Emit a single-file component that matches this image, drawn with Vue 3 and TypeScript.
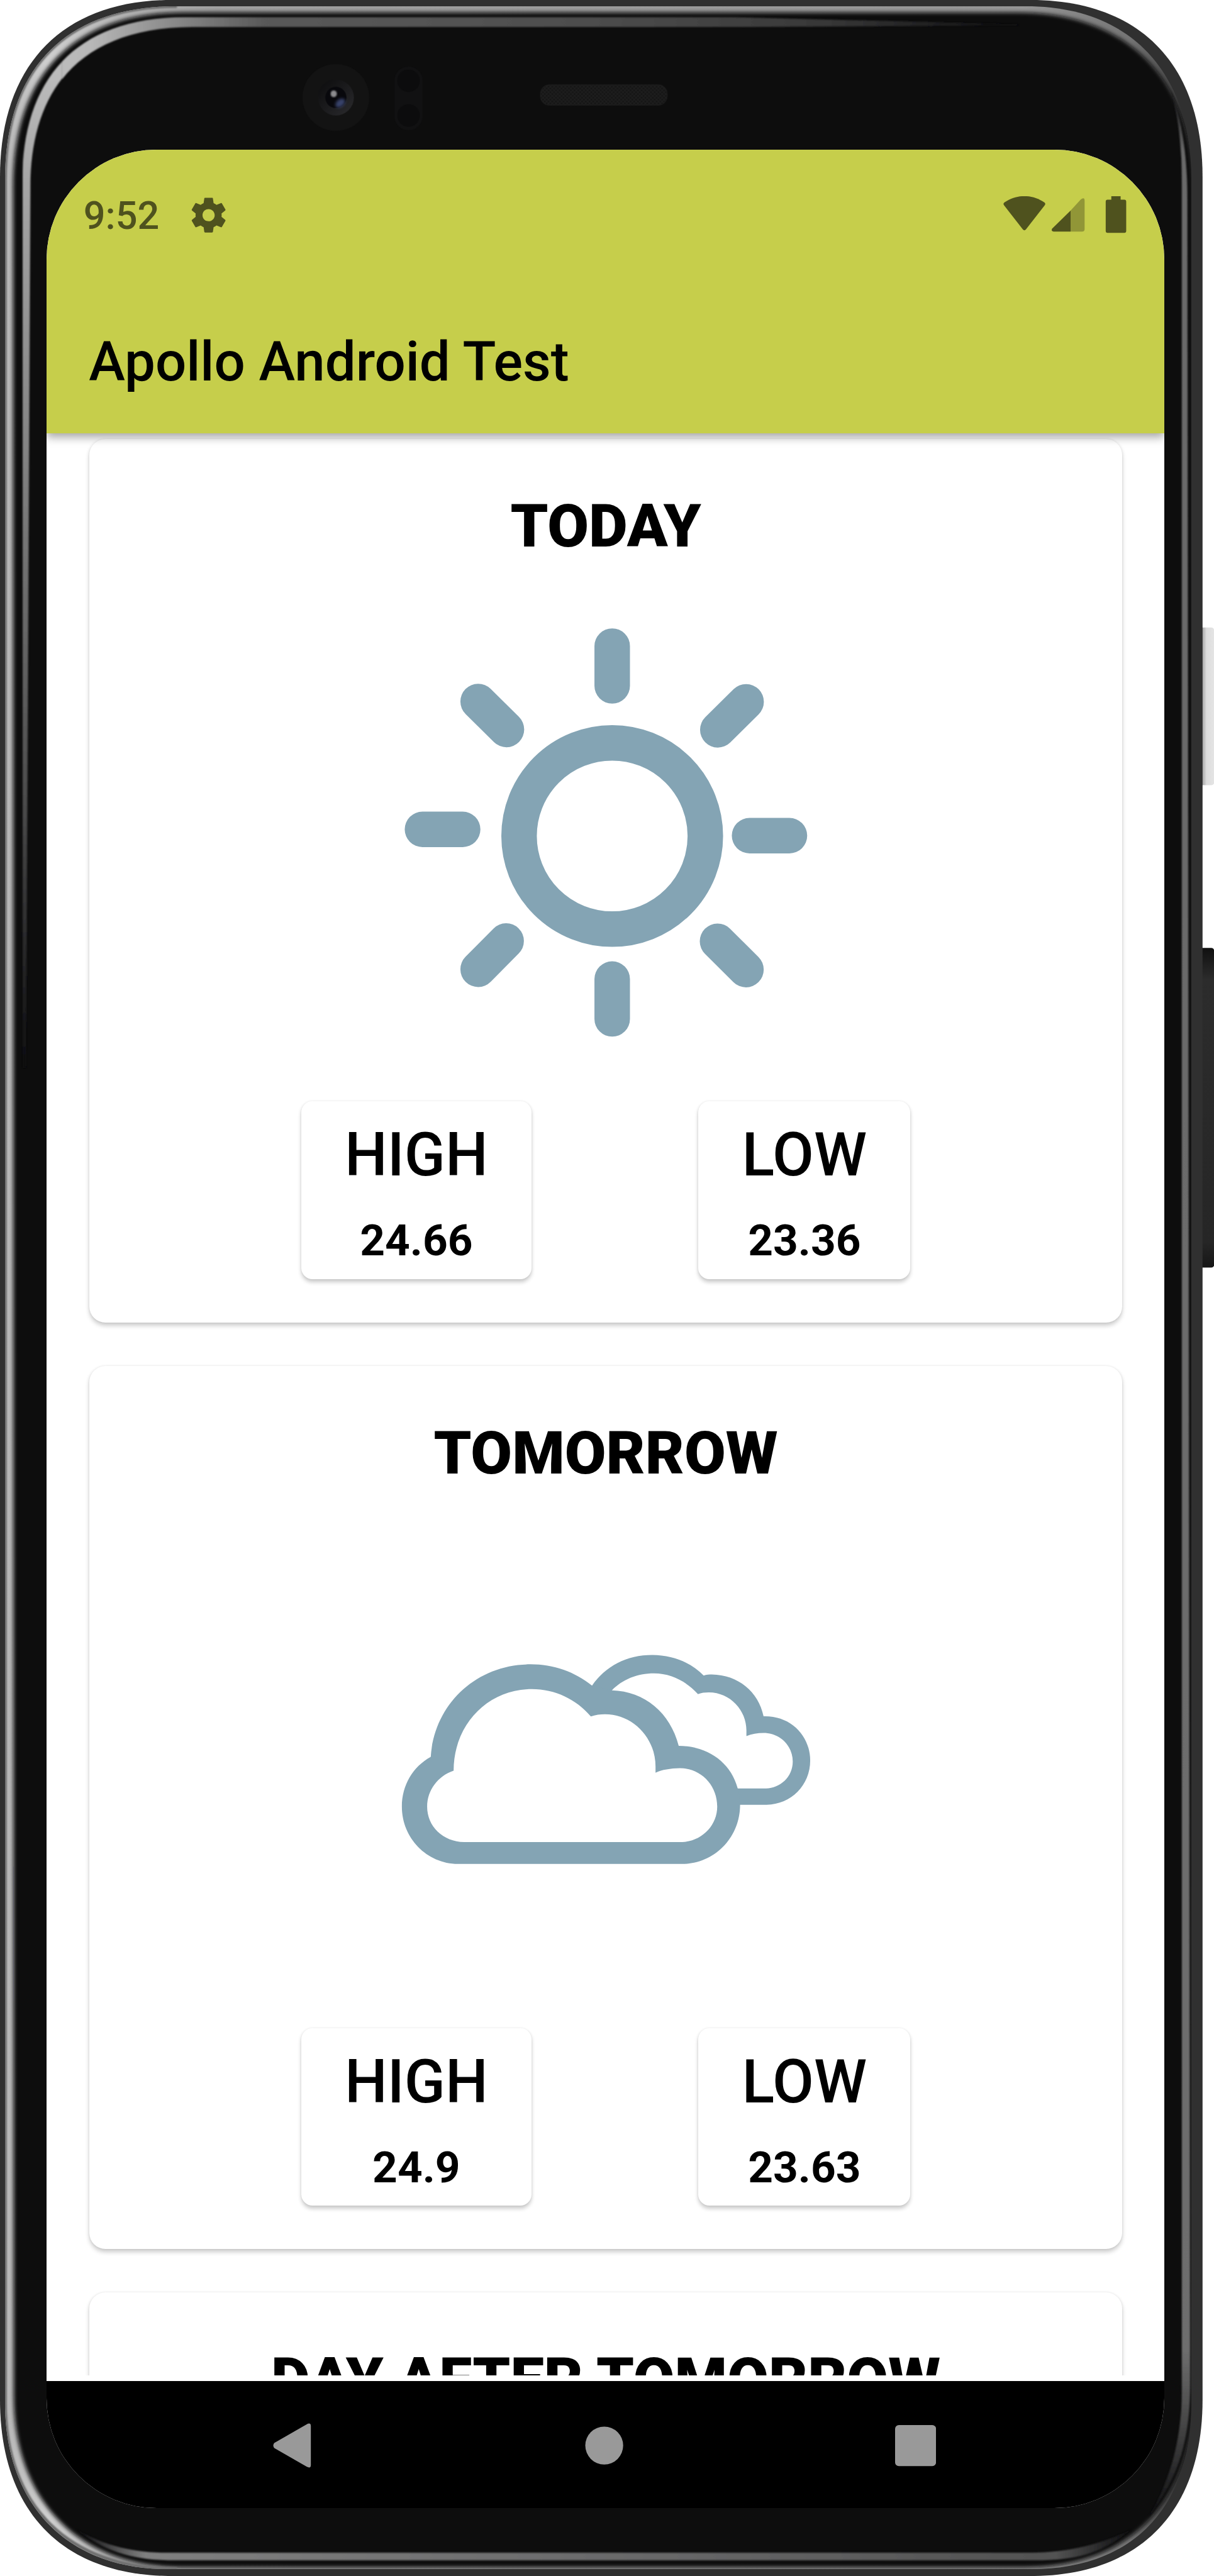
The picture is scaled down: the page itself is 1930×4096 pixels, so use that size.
<script setup lang="ts">
type Sky = 'sun' | 'clouds'

interface Forecast {
  title: string
  sky: Sky
  stats: { label: string; value: string }[]
}

const days: Forecast[] = [
  {
    title: 'TODAY',
    sky: 'sun',
    stats: [
      { label: 'HIGH', value: '24.66' },
      { label: 'LOW', value: '23.36' },
    ],
  },
  {
    title: 'TOMORROW',
    sky: 'clouds',
    stats: [
      { label: 'HIGH', value: '24.9' },
      { label: 'LOW', value: '23.63' },
    ],
  },
  { title: 'DAY AFTER TOMORROW', sky: 'sun', stats: [] },
]
</script>

<template>
  <div class="device">
    <svg class="shell" viewBox="0 0 1955 4150" aria-hidden="true">
      <defs>
        <linearGradient id="power" x1="1937" x2="1955" y1="0" y2="0" gradientUnits="userSpaceOnUse">
          <stop offset="0" stop-color="#a8a8a8" />
          <stop offset=".35" stop-color="#dcdcdc" />
          <stop offset="1" stop-color="#e4e4e4" />
        </linearGradient>
        <linearGradient id="volume" x1="0" x2="0" y1="1527" y2="2042" gradientUnits="userSpaceOnUse">
          <stop offset="0" stop-color="#101010" />
          <stop offset=".1" stop-color="#2c2c2c" />
          <stop offset=".92" stop-color="#262626" />
          <stop offset="1" stop-color="#161616" />
        </linearGradient>
        <linearGradient id="rim" x1="0" x2="1937" y1="0" y2="0" gradientUnits="userSpaceOnUse">
          <stop offset="0" stop-color="#b4b4b4" />
          <stop offset=".04" stop-color="#cfcfcf" />
          <stop offset=".1" stop-color="#b4b4b4" />
          <stop offset=".18" stop-color="#a0a0a0" />
          <stop offset=".85" stop-color="#969696" />
          <stop offset=".94" stop-color="#747474" />
          <stop offset=".985" stop-color="#3a3a3a" />
          <stop offset="1" stop-color="#0d0d0f" />
        </linearGradient>
        <linearGradient id="bandLeft" x1="0" x2="0" y1="0" y2="1720" gradientUnits="userSpaceOnUse">
          <stop offset="0" stop-color="#bebebe" />
          <stop offset=".07" stop-color="#bcbcbc" />
          <stop offset=".17" stop-color="#a6a6a6" />
          <stop offset=".42" stop-color="#848484" />
          <stop offset=".75" stop-color="#4c4c4c" />
          <stop offset="1" stop-color="#0d0d0f" />
        </linearGradient>
        <linearGradient id="bandTop" x1="100" x2="1640" y1="0" y2="0" gradientUnits="userSpaceOnUse">
          <stop offset="0" stop-color="#bcbcbc" />
          <stop offset=".03" stop-color="#b8b8b8" />
          <stop offset=".1" stop-color="#929292" />
          <stop offset=".21" stop-color="#5a5a5a" />
          <stop offset=".55" stop-color="#4e4e4e" />
          <stop offset=".8" stop-color="#383838" />
          <stop offset="1" stop-color="#0d0d0f" />
        </linearGradient>
        <linearGradient id="bandRight" x1="0" x2="0" y1="145" y2="4060" gradientUnits="userSpaceOnUse">
          <stop offset="0" stop-color="#0d0d0f" />
          <stop offset=".025" stop-color="#6a6a6a" />
          <stop offset=".93" stop-color="#6e6e6e" />
          <stop offset=".955" stop-color="#4e4e4e" />
          <stop offset="1" stop-color="#0d0d0f" />
        </linearGradient>
        <linearGradient id="bandBottom" x1="123" x2="1822" y1="0" y2="0" gradientUnits="userSpaceOnUse">
          <stop offset="0" stop-color="#0d0d0f" />
          <stop offset=".065" stop-color="#808080" />
          <stop offset=".5" stop-color="#6b6b6c" />
          <stop offset=".93" stop-color="#525252" />
          <stop offset="1" stop-color="#0d0d0f" />
        </linearGradient>
        <linearGradient id="lensRing" x1="0" x2="1" y1="0" y2="1">
          <stop offset="0" stop-color="#0c0c0d" />
          <stop offset=".5" stop-color="#1b1b1d" />
          <stop offset="1" stop-color="#2c2c2f" />
        </linearGradient>
        <pattern id="mesh" width="6" height="6" patternUnits="userSpaceOnUse">
          <rect width="6" height="6" fill="#1e1e1e" />
          <circle cx="1.5" cy="1.5" r="1.3" fill="#111" />
          <circle cx="4.5" cy="4.5" r="1.3" fill="#111" />
        </pattern>
        <filter id="soft1" x="-5%" width="110%" y="-5%" height="110%"><feGaussianBlur stdDeviation="1" /></filter>
        <filter id="soft2" x="-50%" width="200%" y="-50%" height="200%"><feGaussianBlur stdDeviation="2.4" /></filter>
        <filter id="soft3" x="-5%" width="110%" y="-5%" height="110%"><feGaussianBlur stdDeviation="3" /></filter>
        <clipPath id="glass">
          <path d="M8 290C8 108 108 10 285 10H1652C1825 10 1919 120 1919 290V3870C1919 4040 1825 4139 1660 4139H270C108 4139 8 4035 8 3870Z" />
        </clipPath>
        <clipPath id="leftHalf"><rect x="0" y="0" width="100.5" height="1730" /></clipPath>
        <clipPath id="topHalf"><rect x="100" y="0" width="1600" height="300" /></clipPath>
      </defs>

      <path d="M1930 1011H1951Q1956 1011 1956 1018V1258Q1956 1265 1951 1265H1930Z" fill="url(#power)" />
      <path d="M1930 1527H1951Q1956 1527 1956 1534V2035Q1956 2042 1951 2042H1930Z" fill="url(#volume)" />
      <path
        d="M0 285C0 104 101 0 277 0H1660C1836 0 1937 104 1937 285V3866C1937 4046 1836 4150 1660 4150H277C101 4150 0 4046 0 3866Z"
        fill="#303030"
      />
      <g clip-path="url(#glass)">
        <rect x="8" y="10" width="1911" height="4129" fill="url(#rim)" />
        <path
          d="M21 300C21 125 115 20 295 20H1640C1812 20 1921 125 1921 300V3860C1921 4030 1820 4136 1650 4136H290C118 4134 22 4020 22 3860Z"
          fill="#0d0d0f"
          filter="url(#soft3)"
        />
        <path
          d="M8 290C8 108 108 10 285 10M285 4139C108 4139 8 4035 8 3870V290"
          fill="none"
          stroke="#6f6f6f"
          stroke-width="6"
          filter="url(#soft1)"
        />
      </g>
      <g filter="url(#soft1)">
        <path
          clip-path="url(#leftHalf)"
          d="M36 1720V290C36 140 110 27.500 300 27.500V44C125 44 49 150 49 300L42 1720Z"
          fill="url(#bandLeft)"
        />
        <path
          clip-path="url(#topHalf)"
          d="M36 1720V290C36 140 110 27.500 300 27.500H1180L1640 39V41L1180 43.500H310C125 44 49 150 49 300V1720Z"
          fill="url(#bandTop)"
        />
        <path
          d="M1886 145C1898 190 1903.500 230 1903.500 300V3850C1903.500 3940 1880 4005 1848 4058C1895 3995 1917 3940 1917 3840L1912.500 320C1912.500 250 1904 195 1886 145Z"
          fill="url(#bandRight)"
        />
        <path
          d="M123 4075C170 4102 215 4112.500 270 4112.500H1660C1725 4112 1775 4098 1822 4075C1780 4110 1740 4124 1680 4124.500H270C210 4124 165 4108 123 4075Z"
          fill="url(#bandBottom)"
        />
      </g>

      <circle cx="541" cy="157" r="54" fill="#131313" />
      <circle cx="541" cy="157" r="29" fill="url(#lensRing)" />
      <circle cx="541" cy="157" r="17" fill="#08080c" />
      <ellipse cx="548" cy="166" rx="9" ry="6" transform="rotate(-40 548 166)" fill="#39436b" filter="url(#soft2)" />
      <ellipse cx="537.500" cy="151" rx="5" ry="5.500" fill="#8d8d90" filter="url(#soft1)" />
      <rect x="635" y="107" width="46" height="103" rx="23" fill="#111112" />
      <circle cx="658" cy="130" r="18" fill="#0c0c0d" />
      <circle cx="658" cy="186" r="18" fill="#0c0c0d" />
      <rect x="870.500" y="136.500" width="204" height="33" rx="14" fill="url(#mesh)" stroke="#1f1f1f" />
    </svg>

    <div class="screen">
      <header class="top">
        <div class="status">
          <span class="clock">9:52</span>
          <svg class="gear" viewBox="2 2 20 20">
            <path
              fill-rule="evenodd"
              d="M19.430 12.980c.040-.320.070-.640.070-.980s-.030-.660-.070-.980l2.110-1.650c.190-.150.240-.420.120-.640l-2-3.460c-.120-.220-.390-.300-.610-.220l-2.490 1c-.520-.400-1.080-.730-1.690-.980l-.380-2.650C14.460 2.180 14.250 2 14 2h-4c-.250 0-.460.180-.490.420l-.380 2.650c-.610.250-1.170.590-1.690.980l-2.490-1c-.230-.090-.490 0-.610.220l-2 3.460c-.130.220-.070.490.120.640l2.110 1.650c-.040.320-.070.650-.070.980s.030.660.070.980l-2.110 1.650c-.190.150-.240.420-.120.640l2 3.460c.120.220.390.300.610.220l2.490-1c.520.400 1.080.730 1.690.980l.380 2.650c.030.240.240.420.490.420h4c.250 0 .460-.180.490-.420l.380-2.650c.610-.250 1.170-.590 1.690-.980l2.490 1c.230.090.490 0 .610-.220l2-3.460c.120-.220.070-.490-.120-.640l-2.110-1.650zM12 15.500c-1.930 0-3.500-1.570-3.500-3.500s1.570-3.500 3.500-3.500 3.500 1.570 3.500 3.500-1.570 3.500-3.500 3.500z"
            />
          </svg>
          <span class="spacer"></span>
          <svg class="signals" viewBox="0 0 199 60" width="199" height="60">
            <path d="M1.500 15C0 13 0 11.500 2 10C21-3.500 47-3.500 66 10C68 11.500 68 13 66.500 15L36.500 53.500Q34 56.500 31.500 53.500Z" />
            <path opacity=".45" d="M108.500 23L125 5Q131 1 131 7V53Q131 57 127 57H108.500Z" />
            <path d="M108.500 23V57H81Q76 56 79 52Z" />
            <path d="M174 0H189V5.500H195Q198 5.500 198 8.500V56Q198 59 195 59H168Q165 59 165 56V8.500Q165 5.500 168 5.500H174Z" />
          </svg>
        </div>
        <h1 class="app-title">Apollo Android Test</h1>
      </header>

      <main class="feed">
        <article v-for="day in days" :key="day.title" class="card">
          <h2 class="day">{{ day.title }}</h2>
          <div class="sky">
            <svg v-if="day.sky === 'sun'" viewBox="0 0 1568 1568" width="760" height="760">
              <g fill="none" stroke="#84a4b4" stroke-width="118" stroke-linecap="round">
                <circle cx="797" cy="797" r="309.500" />
                <path
                  d="M797 166V298M797 1272.500V1405M166.500 775H300M1253.500 796H1386M351.500 350L445.500 443M1242 351L1148 444M351.500 1240L444.500 1146M1147 1147L1241.500 1241"
                />
              </g>
            </svg>
            <svg v-else viewBox="0 -441 1568 2280" width="760" height="760" preserveAspectRatio="none">
              <path
                fill="#84a4b4"
                d="M730 344C775 250 845 196 930 196C1000 196 1060 235 1101 295C1110 291 1120 290 1128 290C1215 292 1283 372 1300 492C1390 488 1455 585 1455 706C1455 825 1392 918 1310 920H1100L700 600Z"
              />
              <path
                fill="#fff"
                d="M796 367C830 315 880 285 936 285C992 285 1042 322 1082 385C1093 379 1105 377 1118 377C1190 377 1243 465 1243 560V588C1260 578 1280 573 1300 573C1355 573 1397 635 1397 711C1397 785 1355 840 1308 841H1100L780 600Z"
              />
              <path
                fill="#84a4b4"
                d="M194 688C205 435 345 241 525 241C603 241 673 278 730 344L796 367C905 372 990 475 1018 635C1110 635 1190 710 1214 840C1220 870 1222 895 1222 920C1222 1075 1140 1204 1030 1206H285C180 1204 98 1080 98 928C98 825 135 735 194 688Z"
              />
              <path
                fill="#fff"
                d="M270 755C270 530 385 361 530 361C607 361 677 410 726 493C741 485 757 482 773 482C865 482 941 595 941 735V765C963 750 990 744 1022 743C1092 743 1146 825 1146 928C1146 1020 1095 1095 1030 1100H305C235 1098 182 1025 182 928C182 850 218 780 270 755Z"
              />
            </svg>
          </div>
          <div class="stats">
            <section v-for="stat in day.stats" :key="stat.label" class="stat">
              <span class="label">{{ stat.label }}</span>
              <span class="value">{{ stat.value }}</span>
            </section>
          </div>
        </article>
      </main>

      <nav class="nav">
        <svg width="62" height="72" viewBox="0 0 62 72">
          <path d="M2 32L54 2Q61-2 61 5V67Q61 74 54 70L2 40Q-1 36 2 32Z" />
        </svg>
        <svg class="home" width="62" height="62" viewBox="0 0 62 62"><circle cx="31" cy="31" r="30.500" /></svg>
        <svg width="66" height="66" viewBox="0 0 66 66"><rect width="66" height="66" rx="6" /></svg>
      </nav>
    </div>
  </div>
</template>

<style>
html,
body {
  margin: 0;
  background: #fff;
  overflow: hidden;
}
</style>

<style scoped>
.device {
  position: relative;
  box-sizing: border-box;
  width: 1955px;
  height: 4150px;
  padding: 241px 80px 109px 75px;
  overflow: hidden;
  zoom: 0.987;
  font-family: Roboto, 'Liberation Sans', sans-serif;
  color: #000;
}
.shell {
  position: absolute;
  left: 0;
  top: 0;
  width: 1955px;
  height: 4150px;
}
.screen {
  position: relative;
  display: flex;
  flex-direction: column;
  width: 1800px;
  height: 3800px;
  border-radius: 177px;
  overflow: hidden;
  background: #fff;
}
.top {
  position: relative;
  z-index: 1;
  flex: none;
  box-sizing: border-box;
  height: 457.500px;
  background: #c6ce4b;
  box-shadow: 0 6px 14px rgba(0, 0, 0, 0.36);
}
.status {
  display: flex;
  align-items: center;
  height: 211px;
  padding: 0 60px 0 59.500px;
  fill: #4f521e;
  color: #4f521e;
}
.clock {
  font-size: 62px;
  font-weight: 500;
  line-height: 72px;
  width: 119.500px;
  margin-right: 54px;
  margin-top: 3px;
}
.gear {
  width: 56px;
  height: 57px;
}
.spacer {
  flex: 1;
}
.app-title {
  margin: 79.500px 0 0 68px;
  font-size: 88.100px;
  line-height: 102px;
  font-weight: 500;
}
.feed {
  flex: none;
  display: flex;
  flex-direction: column;
  gap: 70px;
  box-sizing: border-box;
  height: 3128.500px;
  padding: 9px 67.500px 0 69px;
  overflow: hidden;
}
.card {
  flex: none;
  box-sizing: border-box;
  height: 1423px;
  border-radius: 26px;
  background: #fff;
  box-shadow: 0 5px 8px rgba(0, 0, 0, 0.2), 0 0 4px rgba(0, 0, 0, 0.08);
}
.day {
  margin: 0;
  padding-top: 77px;
  height: 176px;
  font-size: 96.600px;
  line-height: 127px;
  font-weight: 900;
  text-align: center;
}
.sky {
  display: flex;
  justify-content: center;
  height: 760px;
  padding-left: 9px;
}
.stats {
  display: flex;
  justify-content: center;
  gap: 269px;
  margin-top: 54px;
}
.stat {
  display: flex;
  flex-direction: column;
  align-items: center;
  box-sizing: border-box;
  height: 286px;
  padding: 30.500px 70px 0;
  border-radius: 18px;
  box-shadow: 0 5px 7px rgba(0, 0, 0, 0.2), 0 0 4px rgba(0, 0, 0, 0.08);
}
.label {
  font-size: 96.900px;
  line-height: 113px;
  font-weight: 500;
}
.value {
  margin-top: 41px;
  font-size: 70.300px;
  line-height: 82px;
  font-weight: 700;
}
.nav {
  display: flex;
  align-items: center;
  justify-content: space-between;
  box-sizing: border-box;
  height: 205.500px;
  margin-top: auto;
  padding: 4px 367px 0 365px;
  background: #000;
  fill: #999;
}
.home {
  margin-left: 3px;
}
</style>
